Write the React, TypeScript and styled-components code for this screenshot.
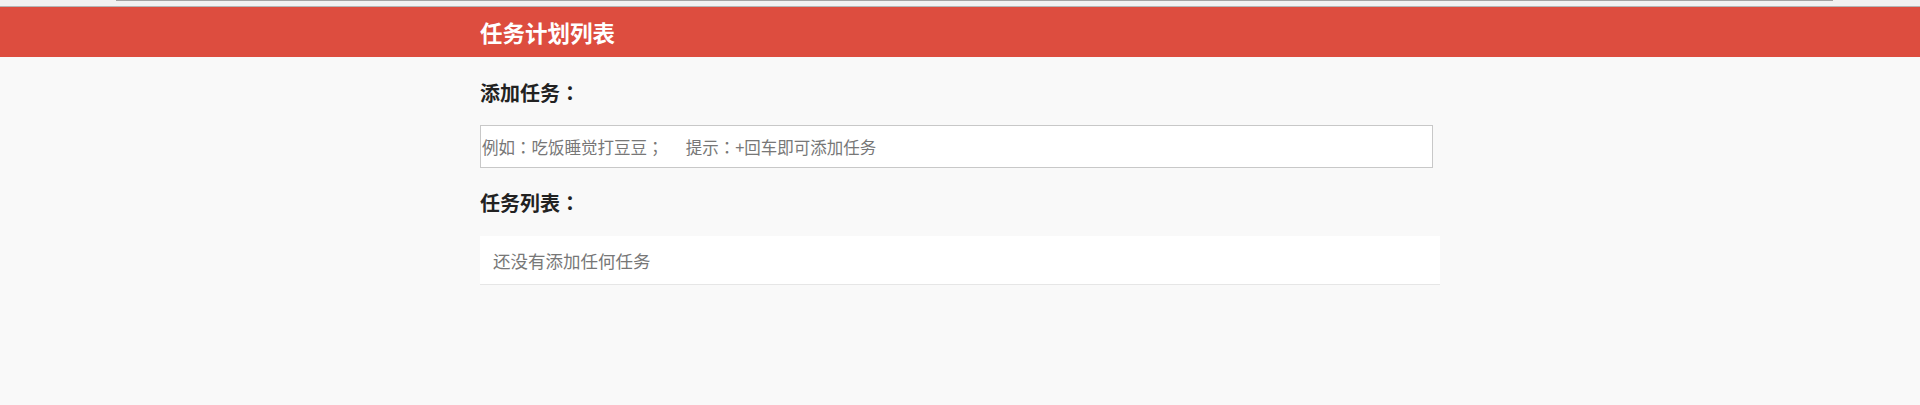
import React from "react";
import styled, { createGlobalStyle } from "styled-components";

const Global = createGlobalStyle`
  html, body {
    margin: 0;
    padding: 0;
    background: #f9f9f9;
    font-family: "Noto Sans CJK SC", "Noto Sans", sans-serif;
  }
  * { box-sizing: border-box; }
`;

const ScrollStrip = styled.div`
  height: 7px;
  background: #f1f1f1;
  border-bottom: 1px solid #b5b5b5;
  display: flex;
  align-items: flex-start;
`;

const Thumb = styled.div`
  margin-left: 116px;
  width: 1717px;
  height: 1px;
  background: #a3a3a3;
`;

const Header = styled.header`
  height: 50px;
  background: #dd4d3f;
  display: flex;
  align-items: center;
`;

const Inner = styled.div`
  width: 960px;
  margin: 0 auto;
`;

const Title = styled.h1`
  margin: 0;
  color: #ffffff;
  font-size: 22.5px;
  font-weight: 700;
  line-height: 30px;
`;

const Main = styled.main`
  width: 960px;
  margin: 0 auto;
  display: flex;
  flex-direction: column;
`;

const SectionTitle = styled.h3<{ $top: number; $bottom: number }>`
  margin: ${(p) => p.$top}px 0 ${(p) => p.$bottom}px;
  font-family: "Noto Sans CJK JP", "Noto Sans CJK SC", sans-serif;
  font-size: 20px;
  font-weight: 700;
  line-height: 24px;
  color: #222;
  text-spacing-trim: space-all;
`;

const TaskInput = styled.input`
  width: 953px;
  height: 43px;
  border: 1px solid #c8c8c8;
  background: #fff;
  padding: 0 1px;
  font-family: "Noto Sans CJK JP", "Noto Sans CJK SC", sans-serif;
  font-size: 16.5px;
  color: #333;
  outline: none;
  text-spacing-trim: space-all;
  &::placeholder {
    color: #777;
    text-spacing-trim: space-all;
  }
`;

const TaskList = styled.ul`
  list-style: none;
  margin: 0;
  padding: 0;
`;

const EmptyItem = styled.li`
  height: 49px;
  background: #fff;
  border-bottom: 1px solid #e6e6e6;
  padding-left: 13px;
  display: flex;
  align-items: center;
  font-size: 17.5px;
  color: #777;
`;

export default function App() {
  return (
    <>
      <Global />
      <ScrollStrip>
        <Thumb />
      </ScrollStrip>
      <Header>
        <Inner>
          <Title>任务计划列表</Title>
        </Inner>
      </Header>
      <Main>
        <SectionTitle $top={24} $bottom={20}>添加任务：</SectionTitle>
        <TaskInput placeholder="例如：吃饭睡觉打豆豆；      提示：+回车即可添加任务" />
        <SectionTitle $top={23} $bottom={21}>任务列表：</SectionTitle>
        <TaskList>
          <EmptyItem>还没有添加任何任务</EmptyItem>
        </TaskList>
      </Main>
    </>
  );
}
